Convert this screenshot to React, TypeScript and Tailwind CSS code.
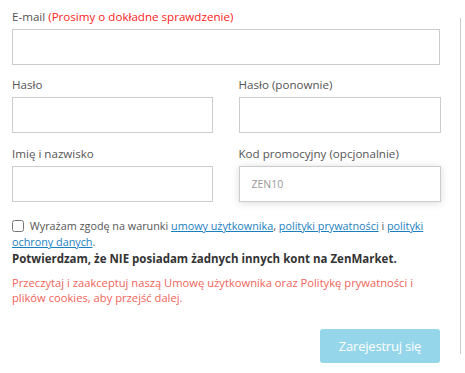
import React from "react";

export default function App() {
  const font = { fontFamily: '"Open Sans", "Noto Sans", sans-serif' };
  const lbl = "block text-[11.6px] leading-[18px] text-[#555] mb-[3px]";
  return (
    <div className="flex w-[465px] h-[373px] bg-white" style={font}>
      <div className="ml-3 w-[428px] pt-2">
        <label className={lbl}>
          E-mail <span className="text-[#ff2222]">(Prosimy o dokładne sprawdzenie)</span>
        </label>
        <input className="block w-full h-[36px] border border-[#ccc] outline-none" />

        <div className="grid grid-cols-2 gap-x-[25px] mt-[11px]">
          <div>
            <label className={lbl}>Hasło</label>
            <input type="password" className="block w-[201px] h-[36px] border border-[#ccc] outline-none" />
          </div>
          <div>
            <label className={lbl}>Hasło (ponownie)</label>
            <input type="password" className="block w-[202px] h-[36px] border border-[#ccc] outline-none" />
          </div>
        </div>

        <div className="grid grid-cols-2 gap-x-[25px] mt-[12px]">
          <div>
            <label className={lbl}>Imię i nazwisko</label>
            <input className="block w-[201px] h-[36px] border border-[#ccc] outline-none" />
          </div>
          <div>
            <label className={lbl}>Kod promocyjny (opcjonalnie)</label>
            <input
              placeholder="ZEN10"
              className="block w-[202px] h-[36px] border border-[#ccc] outline-none pl-[12px] text-[10.5px] placeholder:text-[#999] shadow-[0_1px_8px_rgba(0,0,0,0.15)]"
            />
          </div>
        </div>

        <div className="mt-[16px] text-[#555]">
          <div className="text-[10.8px] leading-[16px]">
            <input type="checkbox" className="align-[-2px] w-[12px] h-[12px] mr-[3px] ml-0" />{" "}
            Wyrażam zgodę na warunki{" "}
            <a className="text-[#1a7fc1] underline">umowy użytkownika</a>,{" "}
            <a className="text-[#1a7fc1] underline">polityki prywatności</a> i{" "}
            <a className="text-[#1a7fc1] underline">polityki</a>{" "}
            <a className="text-[#1a7fc1] underline">ochrony danych</a>.
          </div>
          <div className="text-[11.5px] leading-[16px] font-bold text-[#333] mt-[1px]">
            Potwierdzam, że NIE posiadam żadnych innych kont na ZenMarket.
          </div>
          <p className="text-[11.2px] text-[#f0645c] mt-[8px] leading-[15px] pr-[10px]">
            Przeczytaj i zaakceptuj naszą Umowę użytkownika oraz Politykę prywatności i plików cookies, aby przejść dalej.
          </p>
        </div>

        <div className="flex justify-end mt-[24px]">
          <button className="w-[120px] h-[34px] rounded-[3px] bg-[#95d6ea] text-white text-[13px] tracking-[-0.2px] leading-none">
            Zarejestruj się
          </button>
        </div>
      </div>
      <div className="ml-[20px] mt-[18px] w-px h-[336px] bg-[#cccccc]" />
    </div>
  );
}
